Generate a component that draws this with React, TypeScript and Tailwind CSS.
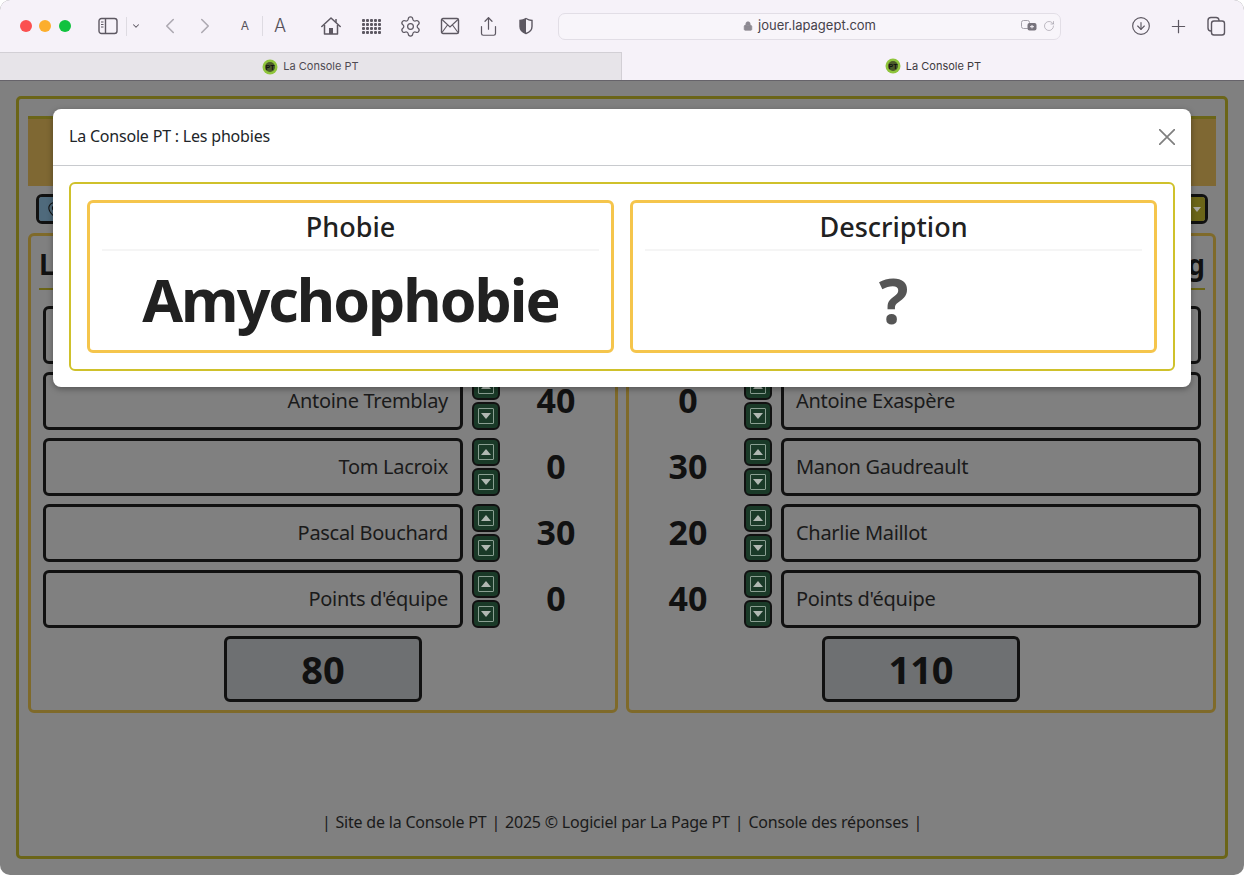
import React from 'react';
import { Settings, Share, CircleArrowDown, Plus, RotateCw, Lock, ChevronDown, ChevronLeft, ChevronRight, MapPin } from 'lucide-react';

const UI_FONT = "font-['Noto_Sans',sans-serif]";

const leftPlayers = [
  { name: 'Marie Gagnon', score: 10 },
  { name: 'Antoine Tremblay', score: 40 },
  { name: 'Tom Lacroix', score: 0 },
  { name: 'Pascal Bouchard', score: 30 },
  { name: "Points d'équipe", score: 0 },
];

const rightPlayers = [
  { name: 'Julie Fortin', score: 20 },
  { name: 'Antoine Exaspère', score: 0 },
  { name: 'Manon Gaudreault', score: 30 },
  { name: 'Charlie Maillot', score: 20 },
  { name: "Points d'équipe", score: 40 },
];

function Favicon() {
  return (
    <svg width="16" height="16" viewBox="0 0 16 16">
      <circle cx="8" cy="8" r="7.5" fill="#8fc43c" />
      <circle cx="8" cy="8" r="5" fill="#4b5a2a" />
      <text x="8" y="10.5" textAnchor="middle" fontSize="7" fontWeight="700" fill="#111" fontFamily="Liberation Sans">PT</text>
    </svg>
  );
}

function Toolbar() {
  const ink = '#5d5862';
  return (
    <div className="flex h-[52px] items-center pl-5 bg-[#f6f2f9]">
      <div className="w-3 h-3 rounded-full bg-[#fb5050]" />
      <div className="ml-[7px] w-3 h-3 rounded-full bg-[#fcae2c]" />
      <div className="ml-2 w-3 h-3 rounded-full bg-[#10c23e]" />

      <svg className="ml-[27px]" width="20" height="18" viewBox="0 0 20 18" fill="none" stroke={ink} strokeWidth="1.4">
        <rect x="1" y="1.5" width="18" height="15" rx="2.5" />
        <path d="M7.5 1.5v15" />
        <path d="M3 5h2.5M3 7.5h2.5M3 10h2.5" strokeWidth="1.1" />
      </svg>
      <div className="ml-2 w-px h-[19px] bg-[#dedbe2]" />
      <ChevronDown className="ml-1" size={10} color={ink} strokeWidth={2.5} />
      <ChevronLeft className="ml-[16px] shrink-0" size={26} color="#aeaab2" strokeWidth={1.5} />
      <ChevronRight className="ml-[9px] shrink-0" size={26} color="#aeaab2" strokeWidth={1.5} />
      <span className="ml-[21px] w-3 text-center text-[12px] leading-none text-[#55515a] font-['Inter',sans-serif]">A</span>
      <div className="ml-[11px] w-px h-5 bg-[#dedbe2]" />
      <span className="ml-[10px] w-[14px] text-center text-[18px] leading-none text-[#55515a] font-['Inter',sans-serif] font-light">A</span>

      <svg className="ml-[34px]" width="20" height="20" viewBox="0 0 20 20" fill="none" stroke={ink} strokeWidth="1.5" strokeLinejoin="round">
        <path d="M.8 10.5 10 2l9.2 8.5" strokeLinecap="round" />
        <path d="M3.5 9v9h13V9" />
        <path d="M15 3v3.5" />
        <rect x="8" y="12" width="4" height="6" fill={ink} stroke="none" />
      </svg>
      <div className="ml-[21px] grid grid-cols-5 gap-[1px] w-[19px]">
        {Array.from({ length: 20 }).map((_, i) => (
          <div key={i} className="w-[3px] h-[3px] rounded-[1px] bg-[#5d5862]" />
        ))}
      </div>
      <Settings className="ml-[18px]" size={23} color={ink} strokeWidth={1.3} />
      <svg className="ml-[18px]" width="20" height="18" viewBox="0 0 20 18" fill="none" stroke={ink} strokeWidth="1.4">
        <rect x="1.5" y="1.5" width="17" height="15" rx="1.5" />
        <path d="m2 2.5 8 7.5 8-7.5M2 15.5 7.5 8M18 15.5 12.5 8" strokeWidth="1.1" />
      </svg>
      <Share className="ml-[18px]" size={21} color={ink} strokeWidth={1.4} />
      <svg className="ml-[17px]" width="20" height="20" viewBox="0 0 20 20">
        <path d="M10 2.5c2 1.2 4 1.8 6 2v6c0 3.500-2.500 5.800-6 7-3.500-1.200-6-3.500-6-7v-6c2-.2 4-.8 6-2Z" fill="none" stroke={ink} strokeWidth="1.4" />
        <path d="M10 2.500c-2 1.200-4 1.800-6 2v6c0 3.500 2.500 5.800 6 7Z" fill={ink} />
      </svg>

      <div className="ml-[22px] flex items-center justify-center relative w-[503px] h-[27px] rounded-[7px] border border-[#e2dee6] bg-[#f8f5fa]">
        <Lock size={10} color="#8d8992" fill="#8d8992" strokeWidth={2} />
        <span className="ml-[5px] text-[13px] text-[#46424a] font-['Inter',sans-serif]">jouer.lapagept.com</span>
        <div className="absolute right-[5px] flex items-center gap-[6px]">
          <svg width="16" height="12" viewBox="0 0 16 12">
            <rect x="0.500" y="0.500" width="8" height="8" rx="2" fill="none" stroke="#a5a1aa" />
            <rect x="6.500" y="3" width="9" height="7.500" rx="2" fill="#77737c" />
            <path d="M9 6.700h4M11 5v3.400" stroke="#f6f2f9" strokeWidth="1" />
          </svg>
          <RotateCw size={12} color="#a5a1aa" strokeWidth={1.4} />
        </div>
      </div>

      <CircleArrowDown className="ml-[70px]" size={20} color={ink} strokeWidth={1.4} />
      <Plus className="ml-[17px]" size={21} color={ink} strokeWidth={1.4} />
      <svg className="ml-[17px]" width="20" height="20" viewBox="0 0 20 20" fill="none" stroke={ink} strokeWidth="1.4">
        <path d="M5.500 15H5a3 3 0 0 1-3-3V4.500A3 3 0 0 1 5 1.500h5A3 3 0 0 1 13 4v1" />
        <rect x="5.500" y="5" width="13" height="14" rx="2.500" />
      </svg>
    </div>
  );
}

function Tabs() {
  return (
    <div className="flex h-[29px] border-b border-[#66636a] font-['Inter',sans-serif] text-[11px]">
      <div className="w-[622px] flex items-center justify-center gap-[5px] bg-[#e7e4e9] border-t border-r border-[#d2cfd5] text-[#4f4b53]">
        <Favicon />
        La Console PT
      </div>
      <div className="flex-1 flex items-center justify-center gap-[5px] bg-[#f6f2f9] text-[#3d3a40]">
        <Favicon />
        La Console PT
      </div>
    </div>
  );
}

function StepButton({ down }: { down?: boolean }) {
  return (
    <div className="w-7 h-7 rounded-[6px] border-2 border-[#111] bg-[#1a3a28] flex items-center justify-center">
      <div className="w-4 h-4 border border-[#8a9f92] flex items-center justify-center rounded-[1px]">
        <svg width="10" height="6" viewBox="0 0 10 6" className={down ? 'rotate-180' : ''}>
          <path d="M5 0 10 6H0Z" fill="#b0b8b2" />
        </svg>
      </div>
    </div>
  );
}

function PlayerRow({ name, score, flip }: { name: string; score: number; flip?: boolean }) {
  const box = (
    <div className={`w-[420px] shrink-0 h-full rounded-[6px] border-[3px] border-[#111] flex items-center px-3 text-[20px] tracking-[-0.3px] text-[#1a1a1a] ${flip ? 'justify-start' : 'justify-end'}`}>
      {name}
    </div>
  );
  const buttons = (
    <div className="w-7 shrink-0 flex flex-col gap-[2px]">
      <StepButton />
      <StepButton down />
    </div>
  );
  const points = (
    <div className="w-[112px] shrink-0 text-center text-[34px] font-bold text-[#111] pb-[2px]">{score}</div>
  );
  return flip ? (
    <div className="flex items-center justify-end gap-[9px] h-[58px]">
      <div className="flex items-center shrink-0">{points}{buttons}</div>
      {box}
    </div>
  ) : (
    <div className="flex items-center gap-[9px] h-[58px]">
      {box}
      <div className="flex items-center shrink-0">{buttons}{points}</div>
    </div>
  );
}

function TeamColumn({ title, players, total, flip }: { title: string; players: { name: string; score: number }[]; total: number; flip?: boolean }) {
  return (
    <div className="flex-1 basis-0 min-w-0 rounded-[6px] border-[3px] border-[#7f6a2a] pb-2">
      <div className={`mx-2 h-[54px] border-b-2 border-[#6b6518] flex items-center text-[28px] font-bold text-[#111] pt-1 ${flip ? 'justify-end' : ''}`}>
        {title}
      </div>
      <div className="mt-4 px-3 flex flex-col gap-2">
        {players.map((p) => (
          <PlayerRow key={p.name} name={p.name} score={p.score} flip={flip} />
        ))}
      </div>
      <div className="mt-2 mx-auto w-[198px] h-[66px] rounded-[6px] border-[3px] border-[#111] bg-[#6e7072] flex items-center justify-center text-[38px] font-bold text-[#111]">
        {total}
      </div>
    </div>
  );
}

function PhobieCard({ title, value, muted }: { title: string; value: string; muted?: boolean }) {
  return (
    <div className="h-[153px] rounded-[6px] border-[3px] border-[#f5c54c] px-3 pt-2 text-center">
      <div className="h-[40px] flex items-center justify-center border-b-2 border-[#f5f5f5] text-[27px] font-medium text-[#212121] pb-[6px]">
        {title}
      </div>
      <div className={`h-[97px] flex items-center justify-center font-bold leading-none ${muted ? 'text-[62px] text-[#555555]' : 'text-[59px] tracking-[-2px] text-[#212121]'}`}>
        {value}
      </div>
    </div>
  );
}

export default function App() {
  return (
    <div className={`relative w-[1244px] h-[875px] overflow-hidden bg-white ${UI_FONT}`}>
      <div className="h-full flex flex-col rounded-[10px] overflow-hidden bg-[#808080]">
        <Toolbar />
        <Tabs />

        <div className="flex-1 pt-[15px] px-4 pb-4">
          <div className="h-full flex flex-col rounded-[5px] border-[3px] border-[#6b6518] px-[9px] pt-[17px] pb-[22px]">
            <div className="h-[70px] shrink-0 border-t-[3px] border-[#6b6518] bg-[#7f6833]" />

            <div className="mt-2 mx-2 h-[30px] shrink-0 flex rounded-[6px] border-[3px] border-[#111] overflow-hidden">
              <div className="w-[30px] bg-[#4f6a7c] flex items-center justify-center">
                <MapPin size={17} color="#111" strokeWidth={1.5} />
              </div>
              <div className="flex-1" />
              <div className="w-[30px] bg-[#6b6518] flex items-center justify-end pr-1">
                <svg width="8" height="5" viewBox="0 0 8 5">
                  <path d="M0 0h8L4 5Z" fill="#a8a8a0" />
                </svg>
              </div>
            </div>

            <div className="mt-[9px] flex gap-2">
              <TeamColumn title="Les Bleus" players={leftPlayers} total={80} />
              <TeamColumn title="Les Viking" players={rightPlayers} total={110} flip />
            </div>

            <div className="mt-auto h-6 flex items-center justify-center gap-[5px] text-[16px] tracking-[-0.2px] text-[#1a1a1a]">
              <span>|</span>
              <span>Site de la Console PT</span>
              <span>|</span>
              <span>2025 © Logiciel par La Page PT</span>
              <span>|</span>
              <span>Console des réponses</span>
              <span>|</span>
            </div>
          </div>
        </div>
      </div>

      {/* modal over the dimmed page */}
      <div className="absolute left-[53px] top-[109px] w-[1138px] rounded-[8px] bg-white shadow-[0_2px_6px_rgba(0,0,0,0.35)]">
        <div className="h-[57px] flex items-center justify-between px-4 border-b border-[#c8cace]">
          <span className="text-[16px] tracking-[-0.2px] text-[#212529] pb-[2px]">La Console PT : Les phobies</span>
          <svg width="16" height="16" viewBox="0 0 16 16" stroke="#7f7f7f" strokeWidth="1.7">
            <path d="M0 0l16 16M16 0 0 16" />
          </svg>
        </div>
        <div className="p-4">
          <div className="rounded-[6px] border-2 border-[#cfc12b] p-4 grid grid-cols-2 gap-4">
            <PhobieCard title="Phobie" value="Amychophobie" />
            <PhobieCard title="Description" value="?" muted />
          </div>
        </div>
      </div>
    </div>
  );
}
